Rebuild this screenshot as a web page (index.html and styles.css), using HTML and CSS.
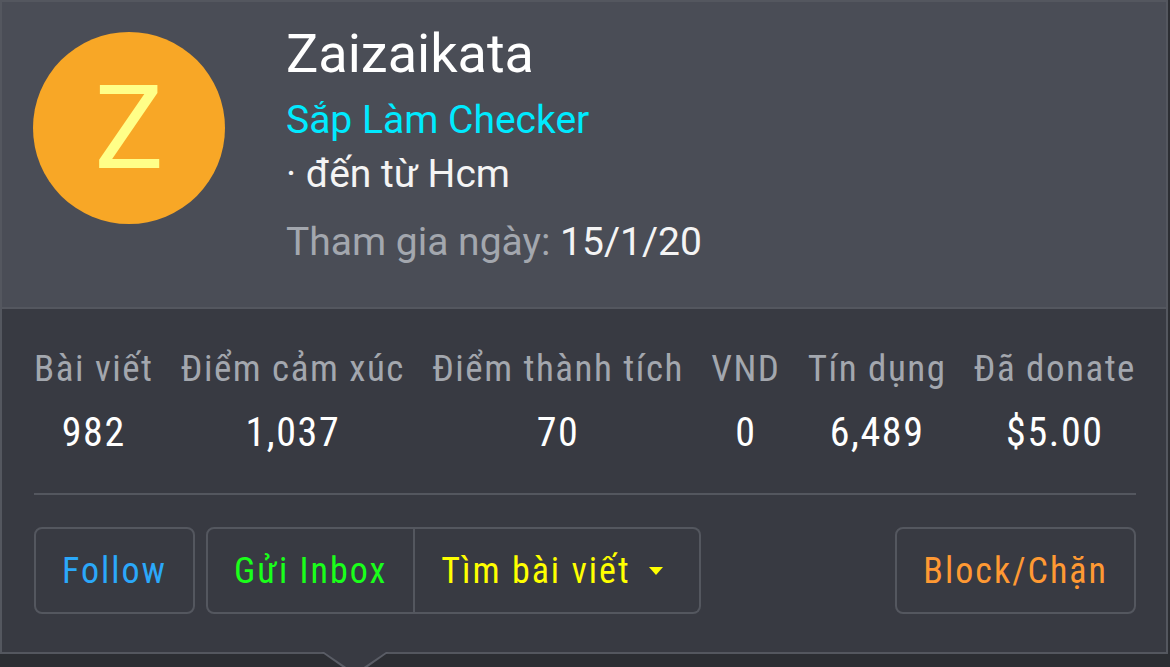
FILE: index.html
```html
<!DOCTYPE html>
<html lang="vi">
<head>
    <meta charset="UTF-8">
    <meta name="viewport" content="width=device-width, initial-scale=1.0">
    <title>Zaizaikata</title>
    <link rel="stylesheet" href="styles.css">
</head>
<body>
    <div class="member-tooltip">
        <div class="tooltip-header">
            <div class="avatar">Z</div>
            <div class="member-info">
                <div class="member-name">Zaizaikata</div>
                <div class="member-title">Sắp Làm Checker</div>
                <div class="member-location">· đến từ Hcm</div>
                <div class="member-joined"><span class="muted">Tham gia ngày:</span> 15/1/20</div>
            </div>
        </div>

        <div class="tooltip-body">
            <div class="stats">
                <div class="stat"><div class="stat-label">Bài viết</div><div class="stat-value">982</div></div>
                <div class="stat"><div class="stat-label">Điểm cảm xúc</div><div class="stat-value">1,037</div></div>
                <div class="stat"><div class="stat-label">Điểm thành tích</div><div class="stat-value">70</div></div>
                <div class="stat"><div class="stat-label">VND</div><div class="stat-value">0</div></div>
                <div class="stat"><div class="stat-label">Tín dụng</div><div class="stat-value">6,489</div></div>
                <div class="stat"><div class="stat-label">Đã donate</div><div class="stat-value">$5.00</div></div>
            </div>

            <div class="actions">
                <a class="btn btn-follow" href="#">Follow</a>
                <div class="btn-group">
                    <a class="btn btn-inbox" href="#">Gửi Inbox</a>
                    <a class="btn btn-find" href="#">Tìm bài viết <span class="caret"></span></a>
                </div>
                <a class="btn btn-block" href="#">Block/Chặn</a>
            </div>
        </div>
    </div>
    <!-- mũi tên của tooltip -->
    <div class="tooltip-arrow"></div>
</body>
</html>
```

FILE: styles.css
```css
body {
    margin: 0;
    background-color: #2c2e33;
    font-family: Roboto, 'Noto Sans', sans-serif;
}

.member-tooltip {
    width: 1168px;
    box-sizing: border-box;
    border: 2px solid #54575f;
}

.tooltip-header {
    display: flex;
    gap: 61px;
    background-color: #4a4d56;
    padding: 30px 31px 0 31px;
    height: 307px;
    box-sizing: border-box;
    border-bottom: 2px solid #54575f;
}

.avatar {
    width: 192px;
    height: 192px;
    flex-shrink: 0;
    border-radius: 50%;
    background-color: #f8a726;
    color: #ffff88;
    font-size: 116px;
    line-height: 192px;
    text-align: center;
}

.member-name {
    color: #fff;
    font-size: 54px;
    line-height: 43px;
}

.member-title {
    color: #00eaff;
    font-size: 39px;
    line-height: 54px;
    margin-top: 18px;
}

.member-location {
    color: #f4f4f4;
    font-size: 39px;
    line-height: 54px;
}

.member-joined {
    color: #f4f4f4;
    font-size: 39px;
    line-height: 54px;
    margin-top: 14px;
}

.muted {
    color: #a3a7ae;
}

.tooltip-body {
    background-color: #383a42;
    padding: 38px 30px 38px 32px;
    font-family: 'Roboto Condensed', Roboto, sans-serif;
}

.stats {
    display: flex;
    justify-content: space-between;
    padding-bottom: 35px;
    border-bottom: 2px solid #54575f;
}

.stat {
    text-align: center;
}

.stat-label {
    color: #a3a7ae;
    font-size: 37px;
    line-height: 44px;
    letter-spacing: 1.5px;
}

.stat-value {
    color: #fff;
    font-size: 40px;
    line-height: 50px;
    letter-spacing: 1.6px;
    margin-top: 17px;
}

.actions {
    display: flex;
    margin-top: 32px;
}

.btn {
    display: flex;
    align-items: center;
    height: 87px;
    box-sizing: border-box;
    padding: 0 26px;
    border: 2px solid #54575f;
    border-radius: 8px;
    font-size: 36px;
    letter-spacing: 2px;
    text-decoration: none;
}

.btn-group {
    display: flex;
    margin-left: 11px;
}

.btn-group .btn-inbox {
    border-radius: 8px 0 0 8px;
}

.btn-group .btn-find {
    border-left: none;
    border-radius: 0 8px 8px 0;
    padding-right: 36px;
}

.btn-follow {
    color: #2ba8fa;
}

.btn-inbox {
    color: #1aff1a;
}

.btn-find {
    color: #ffff00;
}

.btn-block {
    color: #ff9933;
    margin-left: auto;
}

.caret {
    display: inline-block;
    margin-left: 18px;
    border-top: 8px solid #ffff00;
    border-left: 7px solid transparent;
    border-right: 7px solid transparent;
}

.tooltip-arrow {
    position: relative;
    width: 0;
    height: 0;
    margin: -2px 0 0 321px;
    border-top: 24px solid #5a5d66;
    border-left: 34px solid transparent;
    border-right: 34px solid transparent;
}

.tooltip-arrow::after {
    content: "";
    position: absolute;
    left: -31px;
    top: -24px;
    border-top: 21px solid #383a42;
    border-left: 31px solid transparent;
    border-right: 31px solid transparent;
}
```
